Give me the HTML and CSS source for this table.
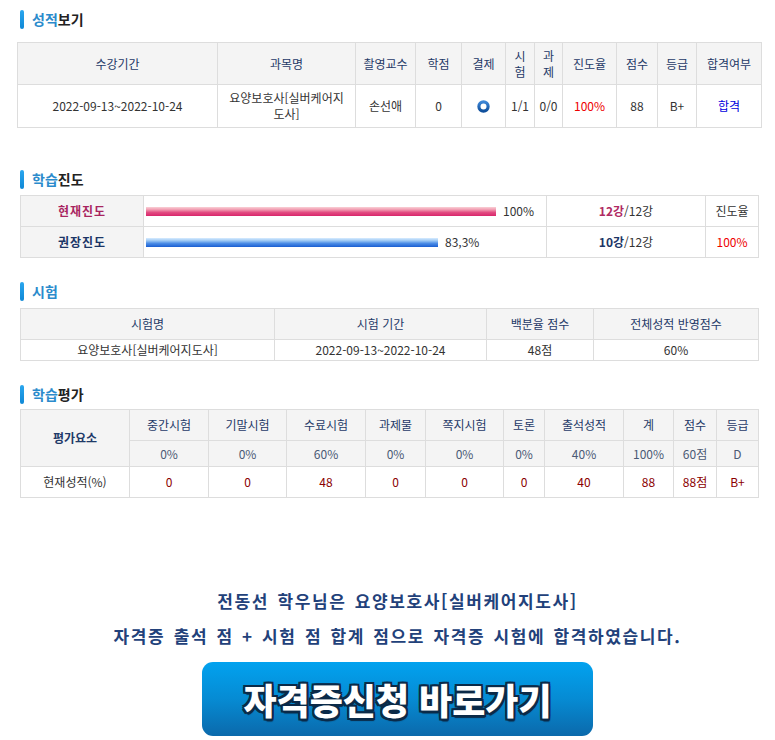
FILE: index.html
```html
<!DOCTYPE html>
<html lang="ko">
<head>
<meta charset="utf-8">
<title>성적보기</title>
<link rel="stylesheet" href="styles.css">
</head>
<body>
<section class="sec sec1">
  <h2 class="title"><span class="ttl"><span class="blue">성적</span>보기</span></h2>
  <table class="grid t1">
    <colgroup>
      <col style="width:200px"><col style="width:138px"><col style="width:60px"><col style="width:46px"><col style="width:44px"><col style="width:29px"><col style="width:28px"><col style="width:54px"><col style="width:41px"><col style="width:39px"><col style="width:65px">
    </colgroup>
    <tr class="head">
      <th>수강기간</th><th>과목명</th><th>촬영교수</th><th>학점</th><th>결제</th><th class="narrow">시험</th><th class="narrow">과제</th><th>진도율</th><th>점수</th><th>등급</th><th>합격여부</th>
    </tr>
    <tr class="body">
      <td>2022-09-13~2022-10-24</td>
      <td class="wrap">요양보호사[실버케어지도사]</td>
      <td>손선애</td>
      <td>0</td>
      <td><svg class="ring" width="13" height="13" viewBox="0 0 13 13"><defs><linearGradient id="rg" x1="0" y1="0" x2="0" y2="1"><stop offset="0" stop-color="#3d86d6"/><stop offset="1" stop-color="#0f4f9c"/></linearGradient></defs><circle cx="6.5" cy="6.5" r="4.6" fill="none" stroke="url(#rg)" stroke-width="3.2"/></svg></td>
      <td>1/1</td>
      <td>0/0</td>
      <td class="red">100%</td>
      <td>88</td>
      <td>B+</td>
      <td class="pass">합격</td>
    </tr>
  </table>
</section>

<section class="sec sec2">
  <h2 class="title"><span class="ttl"><span class="blue">학습</span>진도</span></h2>
  <table class="grid t2">
    <colgroup>
      <col style="width:123px"><col style="width:403px"><col style="width:159px"><col style="width:53px">
    </colgroup>
    <tr>
      <th class="lbl lbl-pink">현재진도</th>
      <td class="barcell"><div class="barwrap"><span class="bar bar-pink" style="width:350px"></span><span class="pct">100%</span></div></td>
      <td><b class="pink">12강</b>/12강</td>
      <td>진도율</td>
    </tr>
    <tr>
      <th class="lbl lbl-navy">권장진도</th>
      <td class="barcell"><div class="barwrap"><span class="bar bar-blue" style="width:292px"></span><span class="pct">83,3%</span></div></td>
      <td><b class="navy">10강</b>/12강</td>
      <td class="red">100%</td>
    </tr>
  </table>
</section>

<section class="sec sec3">
  <h2 class="title"><span class="ttl"><span class="blue">시험</span></span></h2>
  <table class="grid t3">
    <colgroup>
      <col style="width:254px"><col style="width:212px"><col style="width:107px"><col style="width:165px">
    </colgroup>
    <tr class="head">
      <th>시험명</th><th>시험 기간</th><th>백분율 점수</th><th>전체성적 반영점수</th>
    </tr>
    <tr class="body">
      <td>요양보호사[실버케어지도사]</td><td>2022-09-13~2022-10-24</td><td>48점</td><td>60%</td>
    </tr>
  </table>
</section>

<section class="sec sec4">
  <h2 class="title"><span class="ttl"><span class="blue">학습</span>평가</span></h2>
  <table class="grid t4">
    <colgroup>
      <col style="width:109px"><col style="width:79px"><col style="width:78px"><col style="width:79px"><col style="width:60px"><col style="width:78px"><col style="width:41px"><col style="width:79px"><col style="width:50px"><col style="width:43px"><col style="width:42px">
    </colgroup>
    <tr class="head">
      <th rowspan="2" class="strong">평가요소</th>
      <th>중간시험</th><th>기말시험</th><th>수료시험</th><th>과제물</th><th>쪽지시험</th><th>토론</th><th>출석성적</th><th>계</th><th>점수</th><th>등급</th>
    </tr>
    <tr class="sub">
      <td>0%</td><td>0%</td><td>60%</td><td>0%</td><td>0%</td><td>0%</td><td>40%</td><td>100%</td><td>60점</td><td>D</td>
    </tr>
    <tr class="vals">
      <td class="plain">현재성적(%)</td>
      <td>0</td><td>0</td><td>48</td><td>0</td><td>0</td><td>0</td><td>40</td><td>88</td><td>88점</td><td>B+</td>
    </tr>
  </table>
</section>

<section class="result">
  <p class="msg">전동선 학우님은 요양보호사[실버케어지도사]</p>
  <p class="msg">자격증 출석 점 + 시험 점 합계 점으로 자격증 시험에 합격하였습니다.</p>
  <a class="apply" href="#">자격증신청 바로가기</a>
</section>
</body>
</html>
```

FILE: styles.css
```css
html, body {
  margin: 0;
  padding: 0;
  background: #fff;
}
body {
  font-family: "Noto Sans CJK KR", "Noto Sans", sans-serif;
  font-size: 12px;
  color: #333;
  width: 775px;
}
.title {
  display: flex;
  align-items: center;
  gap: 8px;
  height: 19px;
  margin: 0 0 0 20px;
  font-size: 14px;
  font-weight: 700;
  color: #222;
  line-height: 19px;
}
.title::before {
  content: "";
  width: 4px;
  height: 19px;
  border-radius: 2px;
  background: linear-gradient(#2aa6ee, #0f88d6);
}
.title .blue { color: #2b8bcc; }

.sec1 .title { margin-top: 10px; }
.sec1 .grid { margin-top: 13px; margin-left: 17px; }
.sec2 .title { margin-top: 42px; }
.sec2 .grid { margin-top: 6px; }
.sec3 .title { margin-top: 24px; }
.sec3 .grid { margin-top: 7px; }
.sec4 .title { margin-top: 24px; }
.sec4 .grid { margin-top: 5px; }

.grid {
  border-collapse: collapse;
  table-layout: fixed;
  margin-left: 20px;
  width: 739px;
}
.t1 { width: 745px; }
.grid th, .grid td {
  border: 1px solid #dddddd;
  text-align: center;
  vertical-align: middle;
  padding: 0 3px;
  line-height: 16px;
  font-weight: 400;
}
.grid th {
  background: #f4f4f4;
  color: #1f3a68;
}
.t1 .head th { height: 41px; padding: 0 1px; }
.t1 .head th.narrow { padding: 0 4px; }
.t1 .body td { height: 42px; }
.t1 .wrap { padding: 0 6px; }
.ring { display: block; margin: 0 auto; }
.red { color: #ee0000; }
.pass { color: #0000dd; }

.t2 td, .t2 th { height: 30px; }
.grid th.lbl { font-weight: 700; letter-spacing: 1px; }
.grid th.lbl-pink { color: #a8245f; }
.grid th.lbl-navy { color: #1b3566; }
.pink { color: #b02a63; }
.navy { color: #1b3566; }
.t2 b { font-weight: 700; }
.t2 .barcell { padding: 0 2px; text-align: left; }
.barwrap { display: flex; align-items: center; gap: 7px; }
.bar { display: block; height: 9px; }
.bar-pink { background: linear-gradient(#fad0d6 0%, #f19ab0 30%, #e24c82 60%, #d9256b 100%); }
.bar-blue { background: linear-gradient(#d8ecff 0%, #9cc8f4 30%, #4b8ce6 60%, #1a5ed2 100%); }
.pct { color: #333; }

.t3 .head th { height: 30px; }
.t3 .body td { height: 20px; }

.t4 .head th { height: 30px; }
.t4 .head th.strong { font-weight: 700; }
.t4 .sub td { height: 25px; background: #f4f4f4; color: #4b5a74; }
.t4 .vals td { height: 30px; color: #8b0000; }
.t4 .vals td.plain { color: #333; }

.result {
  padding: 85px 0 0 20px;
  text-align: center;
}
.msg {
  margin: 0;
  font-size: 17px;
  font-weight: 700;
  line-height: 35px;
  color: #22417a;
  letter-spacing: 1.6px;
  word-spacing: 2px;
}
.apply {
  display: inline-flex;
  align-items: center;
  justify-content: center;
  width: 391px;
  height: 74px;
  margin-top: 9px;
  border-radius: 11px;
  background: linear-gradient(#02a2ef 0%, #068bd3 50%, #0b69ab 100%);
  color: #fff;
  font-size: 36px;
  font-weight: 900;
  text-decoration: none;
  letter-spacing: 0;
  text-shadow:
    2px 0 0 #0b2a48, -2px 0 0 #0b2a48, 0 2px 0 #0b2a48, 0 -2px 0 #0b2a48,
    2px 2px 0 #0b2a48, -2px -2px 0 #0b2a48, 2px -2px 0 #0b2a48, -2px 2px 0 #0b2a48,
    1px 3px 1px #0b2a48;
}
```
